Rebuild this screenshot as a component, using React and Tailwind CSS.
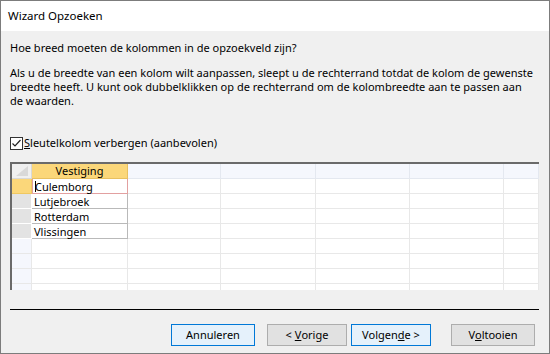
import React from "react";

const COLS = [96, 93, 95, 94, 94, 35];

function Btn({ children, primary, w }) {
  return (
    <div
      className={
        "h-[22px] flex items-center justify-center border text-[11px] text-black whitespace-pre " +
        (primary ? "border-[#0078d7] bg-[#e5f1fb]" : "border-[#adadad] bg-[#e1e1e1]")
      }
      style={{ width: w }}
    >
      {children}
    </div>
  );
}

function EmptyCells({ header }) {
  return COLS.slice(1).map((w, i) => (
    <div
      key={i}
      className={
        "h-full shrink-0 border-r border-b " +
        (header ? "bg-[#f5f7fd] border-[#e4e8f0]" : "bg-white border-[#e8e8e8]")
      }
      style={{ width: w }}
    />
  ));
}

export default function App() {
  const rows = ["Culemborg", "Lutjebroek", "Rotterdam", "Vlissingen"];
  return (
    <div
      className="w-[550px] h-[354px] border border-[#7c7c7c] bg-[#f0f0f0] flex flex-col text-black overflow-hidden"
      style={{ fontFamily: '"Noto Sans", "Open Sans", sans-serif' }}
    >
      <div className="h-[30px] bg-white flex items-center pl-[7px] text-[11.5px] shrink-0">
        Wizard Opzoeken
      </div>
      <div className="flex flex-col px-[9px]">
        <div className="mt-[10px] text-[11px] leading-[14px] whitespace-nowrap">
          Hoe breed moeten de kolommen in de opzoekveld zijn?
        </div>
        <div className="mt-[11px] text-[11px] leading-[14px] whitespace-nowrap">
          Als u de breedte van een kolom wilt aanpassen, sleept u de rechterrand totdat de kolom de gewenste
          <br />
          breedte heeft. U kunt ook dubbelklikken op de rechterrand om de kolombreedte aan te passen aan
          <br />
          de waarden.
        </div>
        <div className="mt-[28px] flex items-center h-[14px] text-[11px]">
          <div className="w-[13px] h-[13px] border border-[#333] bg-white flex items-center justify-center mr-[1px]">
            <svg width="11" height="11" viewBox="0 0 11 11">
              <path d="M1.5 5.5 L4 8 L9.5 2" fill="none" stroke="#222" strokeWidth="1.2" />
            </svg>
          </div>
          <span>
            <span className="underline">S</span>leutelkolom verbergen (aanbevolen)
          </span>
        </div>
        <div className="mt-[12px] h-[128px] w-[529px] border-t-2 border-l-2 border-t-[#6a6a6a] border-l-[#6a6a6a] bg-white flex flex-col overflow-hidden">
          <div className="h-[15px] flex shrink-0 relative z-10">
            <div className="w-[20px] h-full shrink-0 bg-[#f0f0f0] border-r border-b border-[#d8d8d8] flex items-start justify-start">
              <svg width="19" height="14" viewBox="0 0 19 14">
                <path d="M16 2 L16 12 L4 12 Z" fill="#d9d9d9" />
              </svg>
            </div>
            <div className="w-[96px] h-full shrink-0 bg-[#fbd77a] border-r border-b border-[#e8c060] flex items-start justify-center text-[11px] leading-[13px]">
              Vestiging
            </div>
            <EmptyCells header />
          </div>
          {rows.map((r, i) => (
            <div key={r} className="h-[15px] flex shrink-0">
              <div
                className={
                  "w-[20px] h-full shrink-0 border-r border-b " +
                  (i === 0 ? "bg-[#fbd77a] border-[#f0c860]" : "bg-[#e3e3e3] border-white")
                }
              />
              {i === 0 ? (
                <div className="w-[96px] shrink-0 border border-[#e2a0a0] -mt-[1px] h-[16px] bg-white flex items-center text-[11px] leading-[13px] pl-[2px]">
                  <span className="relative">
                    <span className="absolute left-0 top-[1px] w-px h-[11px] bg-black" />
                    Culemborg
                  </span>
                </div>
              ) : (
                <div className="w-[96px] h-full shrink-0 border-r border-b border-[#b9b9b9] bg-white flex items-center text-[11px] leading-[13px] pl-[2px]">
                  {r}
                </div>
              )}
              <EmptyCells />
            </div>
          ))}
          {[0, 1, 2, 3].map((k) => (
            <div key={k} className="h-[15px] flex shrink-0">
              <div className="w-[20px] h-full shrink-0 bg-[#f5f7fd] border-r border-b border-[#e8e8e8]" />
              <div className="w-[96px] h-full shrink-0 border-r border-b border-[#e8e8e8] bg-white" />
              <EmptyCells />
            </div>
          ))}
        </div>
        <div className="mt-[19px] h-px w-[529px] bg-black" />
        <div className="mt-[14px] flex w-[529px]">
          <div className="ml-[161px]">
            <Btn primary w={84}>Annuleren</Btn>
          </div>
          <div className="ml-[12px]">
            <Btn w={80}>
              {"< "}
              <span className="underline">V</span>orige
            </Btn>
          </div>
          <div className="ml-[4px]">
            <Btn primary w={80}>
              Volgen<span className="underline">d</span>e {">"}
            </Btn>
          </div>
          <div className="ml-[20px]">
            <Btn w={84}>
              V<span className="underline">o</span>ltooien
            </Btn>
          </div>
        </div>
      </div>
    </div>
  );
}
